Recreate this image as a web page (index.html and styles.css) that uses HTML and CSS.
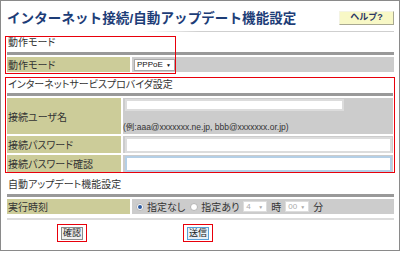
FILE: index.html
```html
<!DOCTYPE html>
<html lang="ja">
<head>
    <meta charset="UTF-8">
    <title>インターネット接続/自動アップデート機能設定</title>
<link rel="stylesheet" href="styles.css">
</head>
<body>
    <div class="frame">
        <div class="head">
            <h1>インターネット接続/自動アップデート機能設定</h1>
            <button class="help">ヘルプ?</button>
        </div>
        <div class="rule"></div>

        <!-- 動作モード -->
        <div class="section mode">
            <div class="secTitle">動作モード</div>
            <div class="bar"></div>
            <div class="row">
                <div class="lbl">動作モード</div>
                <div class="val"><span class="sel">PPPoE<i>▼</i></span></div>
            </div>
        </div>
        <div class="mark markMode"></div>

        <!-- プロバイダ設定 -->
        <div class="section isp">
            <div class="secTitle">インターネットサービスプロバイダ設定</div>
            <div class="bar"></div>
            <div class="row tall">
                <div class="lbl">接続ユーザ名</div>
                <div class="val col">
                    <input class="field short" type="text">
                    <span class="hint">(例:aaa@xxxxxxx.ne.jp, bbb@xxxxxxx.or.jp)</span>
                </div>
            </div>
            <div class="row">
                <div class="lbl">接続パスワード</div>
                <div class="val"><input class="field" type="password"></div>
            </div>
            <div class="row">
                <div class="lbl">接続パスワード確認</div>
                <div class="val"><input class="field focus" type="password"></div>
            </div>
        </div>

        <!-- 自動アップデート -->
        <div class="section update">
            <div class="secTitle">自動アップデート機能設定</div>
            <div class="bar"></div>
            <div class="row">
                <div class="lbl">実行時刻</div>
                <div class="val">
                    <span class="radio on"></span>指定なし
                    <span class="radio"></span>指定あり
                    <span class="sel off">4<i>▼</i></span>時
                    <span class="sel off">00<i>▼</i></span>分
                </div>
            </div>
        </div>
        <div class="endLine"></div>

        <div class="buttons">
            <span class="btnMark"><button class="btn">確認</button></span>
            <span class="btnMark"><button class="btn send">送信</button></span>
        </div>
    </div>
</body>
</html>
```

FILE: styles.css
```css
*{
    margin: 0;
    padding: 0;
    box-sizing: border-box;
}
body{
    background: #fff;
    font-family: "Liberation Sans", "Noto Sans CJK JP", sans-serif;
    font-size: 10px;
    color: #333;
}
.frame{
    position: relative;
    width: 400px;
    height: 251px;
    border: 1px solid #8a8a8a;
    padding: 0 5px 0 6px;
}
.head{
    display: flex;
    align-items: center;
    justify-content: space-between;
    height: 30px;
    padding-top: 1px;
}
.head h1{
    font-size: 13.5px;
    font-weight: bold;
    color: #1d3d77;
    letter-spacing: 0.1px;
}
.help{
    width: 55px;
    height: 14px;
    margin-top: 2px;
    background: #f8f8c6;
    border: 1px solid;
    border-color: #f4f4e4 #a8a890 #a8a890 #f4f4e4;
    font-family: "Liberation Sans", "Noto Sans CJK JP", sans-serif;
    font-size: 9px;
    line-height: 11px;
    font-weight: bold;
    color: #2b3766;
}
.rule{
    height: 1px;
    background: linear-gradient(to right, rgba(204,204,204,0) 35%, #cfcfcf 50%);
}

/* sections */
.section{
    display: flex;
    flex-direction: column;
    row-gap: 2px;
}
.secTitle, .lbl, .val{
    font-feature-settings: "palt";
}
.secTitle{
    line-height: 13px;
    height: 13px;
    padding-left: 1px;
    color: #333;
}
.bar{
    height: 3px;
    background: #999;
}
.mode{
    margin-top: 4px;
}
.mode .secTitle{
    height: 14px;
    line-height: 14px;
}
.row{
    display: grid;
    grid-template-columns: 123px 1fr;
    column-gap: 2px;
    height: 15px;
}
.lbl{
    background: #cccc99;
    display: flex;
    align-items: center;
    padding-left: 1px;
    white-space: nowrap;
}
.val{
    background: #cccccc;
    display: flex;
    align-items: center;
    padding-left: 2px;
    white-space: nowrap;
}

.isp{
    margin: 5px -1px 0 -2px;
    border: 1px solid #e8000b;
    padding: 0 0 0 1px;
}
.isp .row{
    grid-template-columns: 114px 1fr;
    height: 17px;
    margin-right: 1px;
}
.isp .row.tall{
    height: 36px;
}
.isp .bar{
    margin-right: 1px;
}
.val.col{
    flex-direction: column;
    align-items: flex-start;
    justify-content: space-between;
    padding: 1px 0 2px 0;
}
.field{
    width: 267px;
    height: 16px;
    border: 2px solid #dcdcdc;
    background: #fff;
    outline: none;
}
.field.short{
    width: 219px;
    height: 12px;
    margin-left: 2px;
}
.field.focus{
    border-color: #b4cfe6;
}
.hint{
    font-size: 8.5px;
    line-height: 10px;
    color: #333;
}

.update{
    margin-top: 5px;
}
.update .secTitle{
    margin-bottom: 1px;
}
.update .val{
    padding-left: 4px;
    column-gap: 2px;
}
.radio{
    display: inline-block;
    width: 8px;
    height: 8px;
    border-radius: 50%;
    background: #fff;
    border: 1px solid #b5b5b5;
    margin-right: 1px;
    position: relative;
}
.radio.on::after{
    content: "";
    position: absolute;
    left: 1px;
    top: 1px;
    width: 4px;
    height: 4px;
    border-radius: 50%;
    background: #2c5aa0;
}
.update .val .radio:nth-child(2){
    margin-left: 3px;
}

.sel{
    display: inline-flex;
    align-items: center;
    justify-content: space-between;
    height: 12px;
    width: 41px;
    padding: 0 3px 0 2px;
    background: #fff;
    border: 1px solid #a9a9a9;
    font-size: 8px;
    color: #111;
    font-feature-settings: normal;
}
.sel i{
    font-style: normal;
    font-size: 5px;
}
.sel.off{
    width: 24px;
    height: 11px;
    color: #aaa;
    border-color: #ddd;
    margin: 0 2px;
}

.endLine{
    height: 2px;
    margin-top: 4px;
    background: #dcdcdc;
}

.buttons{
    display: flex;
    column-gap: 96px;
    padding-left: 50px;
    margin-top: 4px;
}
.btnMark{
    display: flex;
    align-items: center;
    justify-content: center;
    width: 30px;
    height: 18px;
    border: 1px solid #e8000b;
}
.btn{
    width: 22px;
    height: 13px;
    background: #efefef;
    border: 1px solid #8c8c8c;
    font-family: "Liberation Sans", "Noto Sans CJK JP", sans-serif;
    font-size: 9px;
    line-height: 10px;
    color: #222;
}
.btn.send{
    border-color: #5aa0d8;
    background: #e8f0f6;
}

/* annotation box over the mode section */
.mark{
    position: absolute;
    border: 1px solid #e8000b;
    pointer-events: none;
}
.markMode{
    left: 4px;
    top: 35px;
    width: 171px;
    height: 38px;
}
```
